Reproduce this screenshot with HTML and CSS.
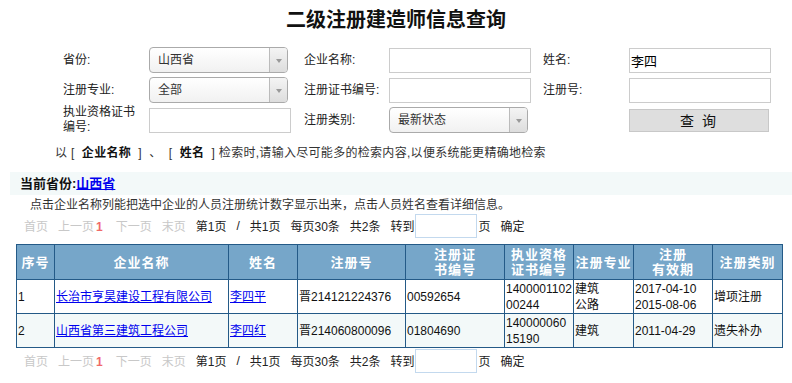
FILE: index.html
```html
<!DOCTYPE html>
<html lang="zh-CN">
<head>
    <meta charset="UTF-8">
    <title>二级注册建造师信息查询</title>
    <link rel="stylesheet" href="styles.css">
</head>
<body>
    <h1 class="title">二级注册建造师信息查询</h1>

    <div class="search-form">
        <label>省份:</label>
        <div class="select"><span class="val">山西省</span><span class="arrow"></span></div>
        <label>企业名称:</label>
        <input type="text" class="field">
        <label>姓名:</label>
        <input type="text" class="field" value="李四">

        <label>注册专业:</label>
        <div class="select"><span class="val">全部</span><span class="arrow"></span></div>
        <label>注册证书编号:</label>
        <input type="text" class="field">
        <label>注册号:</label>
        <input type="text" class="field">

        <label class="wrap">执业资格证书编号:</label>
        <input type="text" class="field">
        <label>注册类别:</label>
        <div class="select narrow"><span class="val">最新状态</span><span class="arrow"></span></div>
        <span></span>
        <button class="btn-search">查 询</button>
    </div>

    <p class="hint">以&nbsp;[&nbsp;&nbsp;<b>企业名称</b>&nbsp;&nbsp;]&nbsp;&nbsp;、&nbsp;&nbsp;[&nbsp;&nbsp;<b>姓名</b>&nbsp;&nbsp;]&nbsp;检索时,请输入尽可能多的检索内容,以便系统能更精确地检索</p>

    <div class="province">当前省份:<a href="#">山西省</a></div>
    <p class="info">点击企业名称列能把选中企业的人员注册统计数字显示出来，点击人员姓名查看详细信息。</p>

    <div class="pager">
        <span class="off">首页</span>
        <span class="off">上一页<b class="cur">1</b></span>
        <span class="off">下一页</span>
        <span class="off">末页</span>
        <span>第1页</span>
        <span>/</span>
        <span>共1页</span>
        <span>每页30条</span>
        <span>共2条</span>
        <span class="goto">转到<input type="text" class="page-input">页</span>
        <span>确定</span>
    </div>

    <table class="result">
        <thead>
            <tr>
                <th class="c-no">序号</th>
                <th class="c-corp">企业名称</th>
                <th class="c-name">姓名</th>
                <th class="c-reg">注册号</th>
                <th class="c-cert">注册证<br>书编号</th>
                <th class="c-qual">执业资格<br>证书编号</th>
                <th class="c-major">注册专业</th>
                <th class="c-date">注册<br>有效期</th>
                <th class="c-type">注册类别</th>
            </tr>
        </thead>
        <tbody>
            <tr>
                <td>1</td>
                <td><a href="#">长治市亨昊建设工程有限公司</a></td>
                <td><a href="#">李四平</a></td>
                <td>晋214121224376</td>
                <td>00592654</td>
                <td>1400001102<br>00244</td>
                <td>建筑<br>公路</td>
                <td>2017-04-10<br>2015-08-06</td>
                <td>增项注册</td>
            </tr>
            <tr class="alt">
                <td>2</td>
                <td><a href="#">山西省第三建筑工程公司</a></td>
                <td><a href="#">李四红</a></td>
                <td>晋214060800096</td>
                <td>01804690</td>
                <td>140000060<br>15190</td>
                <td>建筑</td>
                <td>2011-04-29</td>
                <td>遗失补办</td>
            </tr>
        </tbody>
    </table>

    <div class="pager">
        <span class="off">首页</span>
        <span class="off">上一页<b class="cur">1</b></span>
        <span class="off">下一页</span>
        <span class="off">末页</span>
        <span>第1页</span>
        <span>/</span>
        <span>共1页</span>
        <span>每页30条</span>
        <span>共2条</span>
        <span class="goto">转到<input type="text" class="page-input">页</span>
        <span>确定</span>
    </div>
</body>
</html>
```

FILE: styles.css
```css
* {
    margin: 0;
    padding: 0;
    box-sizing: border-box;
}

body {
    font-family: "Liberation Sans", "Noto Sans CJK SC", sans-serif;
    font-size: 12px;
    color: #222;
    background: #fff;
}

a {
    color: #0000ee;
}

.title {
    text-align: center;
    font-size: 20px;
    font-weight: bold;
    line-height: 26px;
    padding-top: 7px;
    color: #111;
}

/* search form */
.search-form {
    display: grid;
    grid-template-columns: 86px 155px 85px 154px 86px 141px;
    grid-auto-rows: 26px;
    row-gap: 4px;
    align-items: center;
    margin: 14px 0 0 63px;
}

.search-form label {
    line-height: 15px;
    color: #222;
}

.search-form label.wrap {
    max-width: 76px;
}

.field {
    width: 142px;
    height: 25px;
    border: 1px solid #ccc;
    font-family: inherit;
    font-size: 13px;
    padding: 0 1px;
    outline: none;
}

.select {
    display: flex;
    width: 139px;
    height: 26px;
    border: 1px solid #aaa;
    border-radius: 4px;
    background: linear-gradient(#fff, #f1f1f1);
    overflow: hidden;
}

.select .val {
    flex: 1;
    line-height: 24px;
    padding-left: 8px;
    color: #333;
}

.select .arrow {
    width: 18px;
    border-left: 1px solid #bbb;
    background: linear-gradient(#f4f4f4, #ddd);
    position: relative;
}

.select .arrow::after {
    content: '';
    position: absolute;
    left: 6px;
    top: 11px;
    border-left: 3px solid transparent;
    border-right: 3px solid transparent;
    border-top: 4px solid #999;
}

.btn-search {
    width: 140px;
    height: 23px;
    background: #dedede;
    border: 1px solid #c8c8c8;
    font-family: inherit;
    font-size: 14px;
    color: #111;
    letter-spacing: 2px;
}

.hint {
    margin: 12px 0 0 55px;
    line-height: 16px;
    color: #333;
    letter-spacing: 0.3px;
}

.hint b {
    color: #111;
}

.province {
    margin: 11px 0 0 10px;
    height: 23px;
    line-height: 23px;
    padding-left: 10px;
    background: #f3f9f9;
    font-size: 13px;
    font-weight: bold;
    color: #111;
}

.info {
    margin: 2px 0 0 30px;
    line-height: 16px;
    color: #333;
}

.pager {
    display: flex;
    align-items: center;
    height: 25px;
    padding-left: 24px;
    color: #222;
}

.pager > span {
    margin-right: 10px;
}

.pager .off {
    color: #c8c8c8;
}

.pager .cur {
    color: #f06a6a;
    margin-left: 2px;
    margin-right: 3px;
}

.pager .goto {
    display: flex;
    align-items: center;
}

.page-input {
    width: 62px;
    height: 24px;
    margin: 0 2px 0 0;
    border: 1px solid #c3d9ee;
    outline: none;
}

/* result table */
.result {
    margin: 6px 0 0 16px;
    width: 766px;
    border-collapse: collapse;
    table-layout: fixed;
}

.result th,
.result td {
    border: 1px solid #245a87;
}

.result th {
    background: #76a6c9;
    color: #fff;
    font-size: 13px;
    font-weight: bold;
    letter-spacing: 1px;
    line-height: 15px;
    height: 35px;
    text-align: center;
}

.result td {
    height: 34px;
    line-height: 16px;
    padding: 0 1px;
    color: #111;
}

.result tr.alt td {
    background: #f3f9f9;
}

.c-no { width: 38px; }
.c-corp { width: 174px; }
.c-name { width: 69px; }
.c-reg { width: 108px; }
.c-cert { width: 99px; }
.c-qual { width: 69px; }
.c-major { width: 60px; }
.c-date { width: 79px; }
.c-type { width: 70px; }
```
